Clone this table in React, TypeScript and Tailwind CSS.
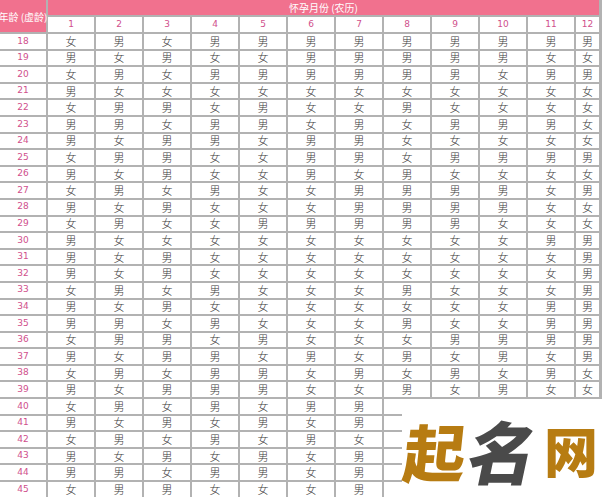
import { Fragment } from "react";

const rows: [number, string][] = [
  [18, "女男女男男男男男男男男男"],
  [19, "男女男女女男男男男男女女"],
  [20, "女男女男男男男男男女男男"],
  [21, "男女女女女女女女女女女女"],
  [22, "女男男女男女女男女女女女"],
  [23, "男男女男男女男女男男男女"],
  [24, "男女男男女男男女女女女女"],
  [25, "女男男女女男男女男男男男"],
  [26, "男女男女女男女男女女女女"],
  [27, "女男女男女女男男男男女男"],
  [28, "男女男女女女男男男男女女"],
  [29, "女男女女男男男男男女女女"],
  [30, "男女女女女女女女女女男男"],
  [31, "男女男女女女女女女女女男"],
  [32, "男女男女女女女女女女女男"],
  [33, "女男女男女女女男女女女男"],
  [34, "男女男女女女女女女女男男"],
  [35, "男男女男女女女男女女男男"],
  [36, "女男男女男女女女男男男男"],
  [37, "男女男男女男女男女男女男"],
  [38, "女男女男男女男女男女男女"],
  [39, "男女男男男女女男女男女女"],
  // columns 8-12 of the last rows lie under the logo
  [40, "女男女男女男男"],
  [41, "男女男女男女男"],
  [42, "女男女男女男女"],
  [43, "男女男女男女男"],
  [44, "男男女男男女男"],
  [45, "女男男女女女男"],
];

const months = [1, 2, 3, 4, 5, 6, 7, 8, 9, 10, 11, 12];

export default function App() {
  return (
    <div className="relative w-[602px] h-[500px] overflow-hidden bg-white">
      <div className="grid grid-cols-[46px_repeat(11,46px)_23px] grid-rows-[15px_15px] auto-rows-[14.6px] gap-[2px] bg-[#b2b2b2] pr-[2px] w-[602px]">
        <div className="row-span-2 bg-[#f1718e] flex items-center justify-center text-white text-[10px] whitespace-nowrap font-['Noto_Sans_CJK_SC',sans-serif]">
          年龄 (虚龄)
        </div>
        <div className="col-span-12 bg-[#f1718e] flex items-center justify-center text-white text-[10px] font-['Noto_Sans_CJK_SC',sans-serif]">
          怀孕月份 (农历)
        </div>
        {months.map((m) => (
          <div
            key={m}
            className="bg-white flex items-center justify-center text-[9px] text-[#d0508c] font-['DejaVu_Sans',sans-serif]"
          >
            {m}
          </div>
        ))}
        {rows.map(([age, cells]) => (
          <Fragment key={age}>
            <div className="bg-white flex items-center justify-center text-[9px] text-[#d0508c] font-['DejaVu_Sans',sans-serif]">
              {age}
            </div>
            {cells.padEnd(12, " ").split("").map((c, i) => (
              <div
                key={i}
                className="bg-white flex items-center justify-center text-[11px] leading-none font-light text-[#3a3a3a] font-['Noto_Sans_CJK_SC',sans-serif]"
              >
                {c.trim()}
              </div>
            ))}
          </Fragment>
        ))}
      </div>

      {/* watermark logo over the table */}
      <div className="absolute left-[402px] top-[399px] right-0 bottom-0 bg-white flex items-center pl-[2px] font-['Noto_Sans_CJK_SC',sans-serif] font-black leading-none">
        <span className="text-[62px] text-[#b77c12] -skew-x-6">起</span>
        <span className="text-[68px] text-[#4a4a4a] -skew-x-12 ml-[4px]">名</span>
        <span className="text-[54px] text-[#b77c12] ml-[6px]">网</span>
      </div>
    </div>
  );
}
